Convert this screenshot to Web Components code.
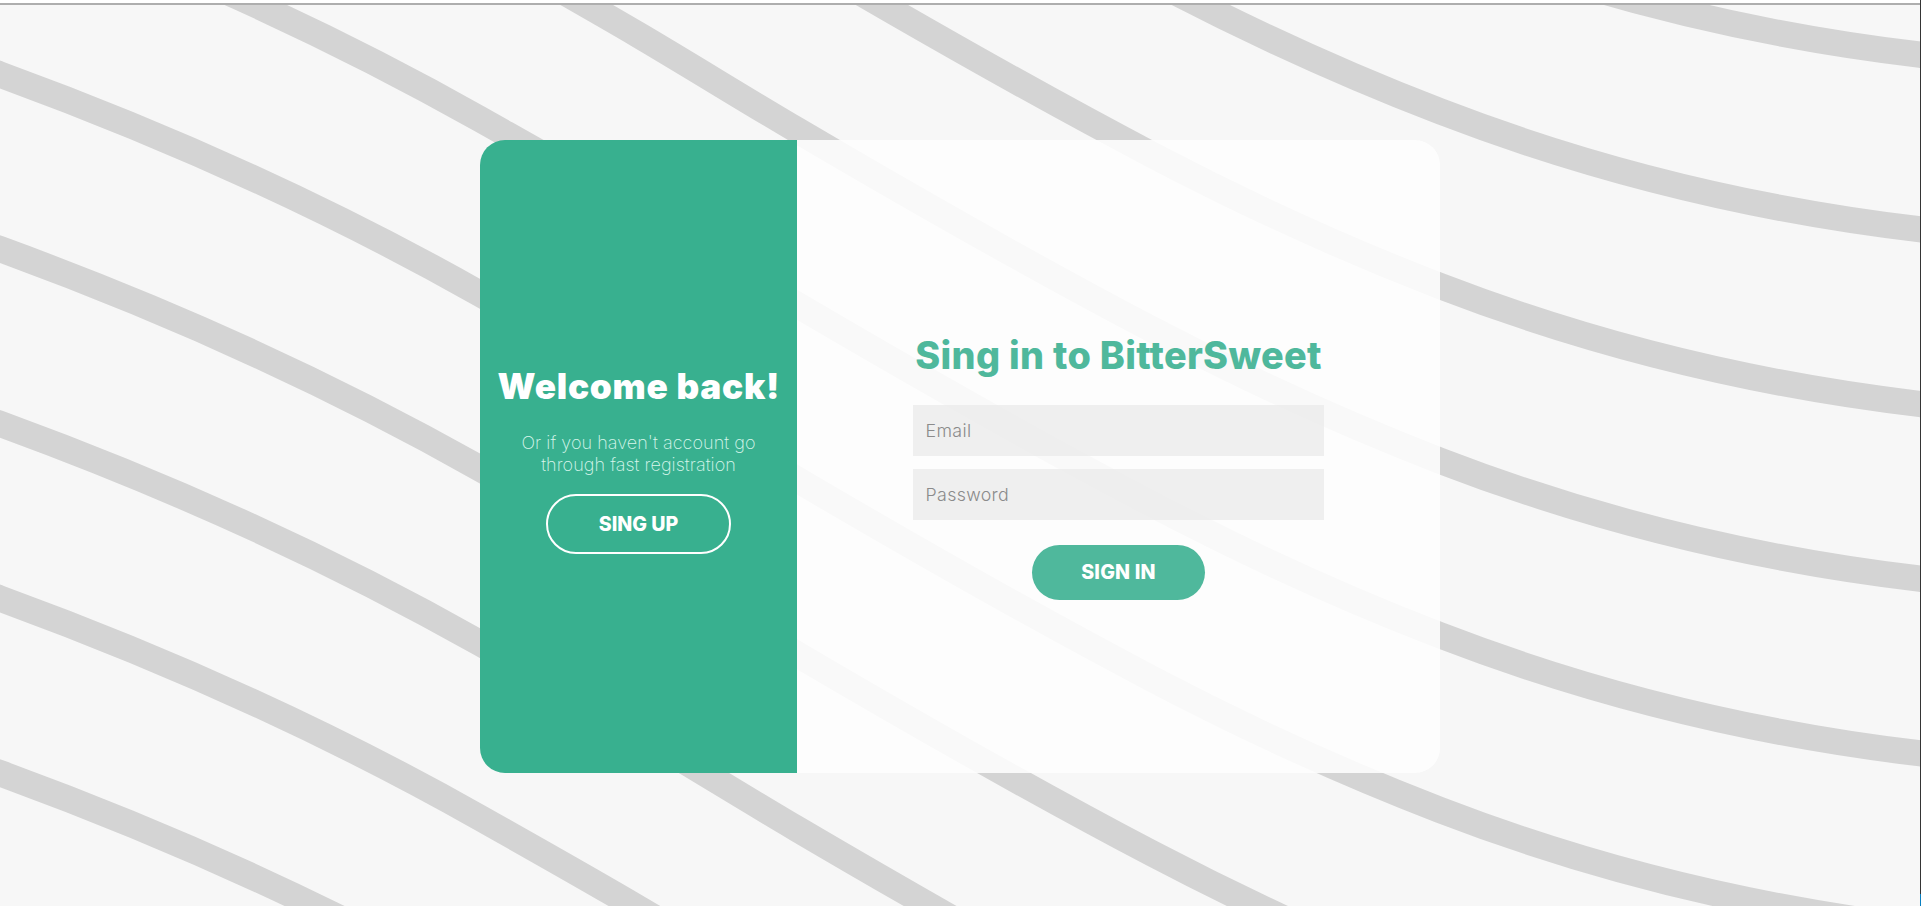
<!DOCTYPE html>
<html lang="en">
<head>
<meta charset="utf-8">
<title>BitterSweet</title>
<style>
html,body{margin:0;height:100%;overflow:hidden}
body{font-family:Inter,"Open Sans",sans-serif}
</style>
</head>
<body>
<auth-page>
  <auth-card>
    <welcome-panel slot="side">
      <span slot="title">Welcome back!</span>
      <span slot="text">Or if you haven't account go<br>through fast registration</span>
      <pill-button slot="action" variant="outline">SING UP</pill-button>
    </welcome-panel>
    <sign-in-form>
      <span slot="title">Sing in to BitterSweet</span>
      <text-field label="Email" type="email"></text-field>
      <text-field label="Password" type="password"></text-field>
      <pill-button slot="action">SIGN IN</pill-button>
    </sign-in-form>
  </auth-card>
</auth-page>
<script>
const define = (name, html, setup) => customElements.define(name, class extends HTMLElement {
  constructor() {
    super();
    this.attachShadow({ mode: "open" }).innerHTML = html;
  }
  connectedCallback() { if (setup) setup(this, this.shadowRoot); }
});

define("wave-backdrop", `
<style>:host{display:block;width:100%;height:100%}svg{display:block}</style>
<svg width="1921" height="906" viewBox="0 0 1921 906" fill="none" stroke="#d4d4d4" stroke-width="26.2"></svg>`,
(host, root) => {
  // One wave as [x, y, slope] knots, repeated vertically.
  const knots = [[-40,60.5,.34],[0,74.5,.365],[480,293.8,.565],[640,385.2,.59],[797,479.5,.588],[1152,678.8,.525],[1440,810,.385],[1920,928,.118],[1960,932,.1]];
  let d = `M${knots[0][0]} ${knots[0][1]}`;
  for (let i = 1; i < knots.length; i++) {
    const [x0,y0,m0] = knots[i-1], [x1,y1,m1] = knots[i], h = (x1-x0)/3;
    d += `C${x0+h} ${y0+m0*h} ${x1-h} ${y1-m1*h} ${x1} ${y1}`;
  }
  let out = "";
  for (let k = -6; k <= 5; k++) out += `<path d="${d}" transform="translate(0 ${k*174.67})"/>`;
  root.querySelector("svg").innerHTML = out;
});

define("auth-page", `
<style>
:host{display:grid;grid-template:3px 2px 1fr / 1fr 1px;width:100vw;height:100vh;background:#f7f7f7;overflow:hidden}
.gap{background:#fff;grid-area:1/1;z-index:1}
.rule{background:#aeaeae;grid-area:2/1;z-index:1}
.edge{grid-area:1/2/4/3;background:linear-gradient(#353535 894px,#0a7fc0 894px);z-index:1}
wave-backdrop{grid-area:1/1/4/3}
main{grid-area:1/1/4/2;z-index:1;display:flex;justify-content:center;align-items:flex-start;padding-top:140px;box-sizing:border-box}
</style>
<wave-backdrop></wave-backdrop><div class="gap"></div><div class="rule"></div><div class="edge"></div>
<main><slot></slot></main>`);

define("auth-card", `
<style>
:host{display:grid;grid-template-columns:317px 643px;width:960px;height:633px;border-radius:25px;overflow:hidden}
.main{background:rgba(254,254,254,.88);display:flex;justify-content:center}
</style>
<slot name="side"></slot><div class="main"><slot></slot></div>`);

define("welcome-panel", `
<style>
:host{display:flex;flex-direction:column;align-items:center;background:#38b08f;color:#fff;box-sizing:border-box;padding-top:221px}
h1{margin:0;font:900 35.2px/50px Inter,sans-serif;white-space:nowrap;letter-spacing:.75px;margin-right:-.7px}
p{margin:21px 0 18px;font:200 18px/22px Inter,sans-serif;text-align:center;white-space:nowrap;color:#d8f6ec;letter-spacing:.05px}
</style>
<h1><slot name="title"></slot></h1><p><slot name="text"></slot></p><slot name="action"></slot>`);

define("sign-in-form", `
<style>
:host{display:flex;flex-direction:column;align-items:center;width:411px;padding-top:190px}
h2{margin:0;font:800 37.8px/50px Inter,sans-serif;white-space:nowrap;color:#4fb89c;letter-spacing:.33px}
.fields{display:grid;gap:13px;width:100%;margin:25px 0 25px}
</style>
<h2><slot name="title"></slot></h2><div class="fields"><slot></slot></div><slot name="action"></slot>`);

define("text-field", `
<style>
:host{display:block;height:51px}
input{display:block;box-sizing:border-box;width:100%;height:100%;border:0;margin:0;padding:0 12.5px 1px;outline:0;background:rgba(230,230,230,.62);font:300 17.8px Inter,sans-serif;letter-spacing:.35px}
input::placeholder{color:#8b8b8b;opacity:1}
</style>
<input>`, (host, root) => {
  const i = root.querySelector("input");
  i.type = host.getAttribute("type");
  i.placeholder = host.getAttribute("label");
});

define("pill-button", `
<style>
:host{display:block}
button{display:block;box-sizing:border-box;width:173px;height:55px;border:0;border-radius:27.5px;padding:0 0 1px;background:#4fb89c;color:#fff;font:800 19.6px/24px Inter,sans-serif;letter-spacing:.2px}
:host([variant=outline]) button{width:185px;height:60px;padding:0;border:2px solid #fff;border-radius:30px;background:none;letter-spacing:0}
</style>
<button><slot></slot></button>`);
</script>
</body>
</html>
